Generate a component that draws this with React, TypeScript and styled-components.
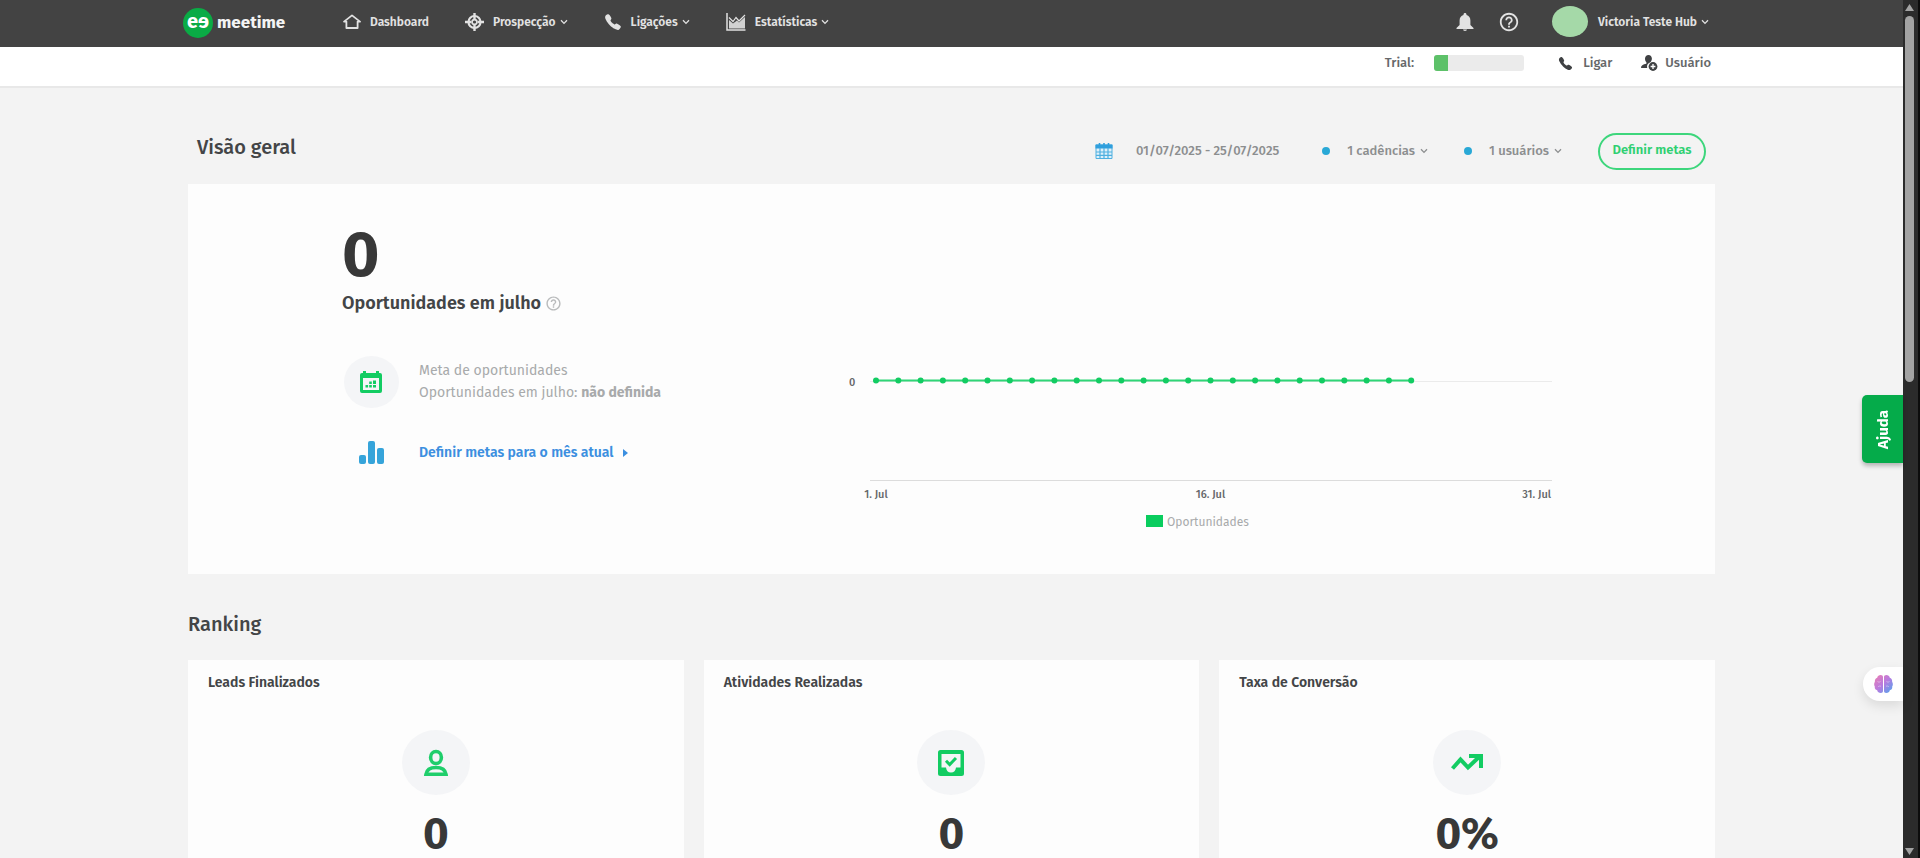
import React from "react";
import styled, { createGlobalStyle } from "styled-components";
import { IoCall } from "react-icons/io5";
import { MdHelpOutline } from "react-icons/md";

const GlobalStyle = createGlobalStyle`
  *, *::before, *::after { box-sizing: border-box; }
  body {
    margin: 0;
    background: #f3f3f3;
    color: #434547;
    font-family: "Fira Sans", "Noto Sans", "Open Sans", sans-serif;
    font-size: 13px;
    line-height: 20px;
  }
  h1, h2, h3, p, ul { margin: 0; padding: 0; }
  ul { list-style: none; }
  a { color: inherit; text-decoration: none; }
  button { font: inherit; color: inherit; background: none; border: 0; padding: 0; cursor: pointer; }
  svg { display: block; flex: none; }
`;

const Shell = styled.div`
  display: flex;
  height: 100vh;
  overflow: hidden;
`;

const Page = styled.div`
  flex: 1;
  min-width: 0;
  overflow: hidden;
`;

/* Top bar */
const TopBar = styled.header`
  background: #434343;
  color: #e2e2e2;
`;

const TopInner = styled.div`
  display: flex;
  align-items: center;
  max-width: 1537px;
  height: 47px;
  margin: 0 auto;
  padding: 0 11px 10px 0;
`;

const Brand = styled.a`
  display: flex;
  align-items: center;
  gap: 4px;
  width: 160px;
  padding-top: 8px;
  color: #f4f4f4;
  font-size: 17px;
  font-weight: 700;
`;

const BrandMark = styled.span`
  display: flex;
  justify-content: center;
  width: 30px;
  height: 30px;
  border-radius: 50%;
  background: #0aab45;
  color: #fff;
  font-size: 20px;
  line-height: 26px;
`;

const NavList = styled.ul`
  display: flex;
  gap: 36px;
  padding-top: 6px;
`;

const NavLink = styled.a`
  display: flex;
  align-items: center;
  gap: 9px;
  font-size: 12px;
  font-weight: 600;
`;

const WithCaret = styled.span<{ $gap?: number }>`
  display: inline-flex;
  align-items: center;
  gap: ${(p) => p.$gap ?? 4}px;
  white-space: nowrap;
`;

const TopActions = styled.div`
  display: flex;
  align-items: center;
  gap: 24px;
  margin-left: auto;
  padding-top: 6px;
`;

const IconButton = styled.button`
  display: flex;
`;

const Account = styled.button`
  display: flex;
  align-items: center;
  gap: 10px;
  margin-left: 8px;
  font-size: 12px;
  font-weight: 600;
`;

const Avatar = styled.span`
  width: 36px;
  height: 31px;
  border-radius: 50%;
  background: #a5d9a8;
`;

/* Secondary bar */
const SubBar = styled.div`
  background: #fff;
  border-bottom: 2px solid #e8e8e8;
`;

const SubInner = styled.div`
  display: flex;
  align-items: center;
  justify-content: flex-end;
  max-width: 1527px;
  height: 39px;
  margin: 0 auto;
  padding: 0 4px 7px 0;
  color: #66686a;
  font-size: 13px;
  font-weight: 500;
`;

const TrialMeter = styled.div`
  width: 90px;
  height: 16px;
  margin: 0 34px 0 20px;
  border-radius: 3px;
  overflow: hidden;
  background: #ebebeb;
`;

const TrialFill = styled.div`
  width: 15%;
  height: 100%;
  background: #5dc169;
`;

const SubLink = styled.button<{ $gap: number }>`
  display: flex;
  align-items: center;
  gap: ${(p) => p.$gap}px;
  & + & { margin-left: 29px; }
`;

/* Content */
const Content = styled.main`
  max-width: 1527px;
  margin: 0 auto;
`;

const OverviewHead = styled.div`
  display: flex;
  align-items: center;
  height: 96px;
  padding: 29px 9px 0 9px;
`;

const SectionTitle = styled.h2`
  color: #434547;
  font-size: 20px;
  font-weight: 500;
  line-height: 28px;
`;

const OverviewTitle = styled(SectionTitle)`
  padding-bottom: 8px;
`;

const Filters = styled.div`
  display: flex;
  align-items: center;
  margin-left: auto;
  color: #8c8e8f;
  font-size: 13px;
  font-weight: 500;
`;

const DateFilter = styled.button`
  display: flex;
  align-items: center;
  gap: 23px;
  margin-right: 7px;
`;

const DotFilter = styled.button`
  display: flex;
  align-items: center;
  gap: 17px;
  margin-left: 36px;
  &::before {
    content: "";
    width: 8px;
    height: 8px;
    border-radius: 50%;
    background: #29a8d6;
  }
`;

const GoalButton = styled.button`
  width: 108px;
  height: 37px;
  margin: 2px 0 0 36px;
  padding-bottom: 4px;
  border: 2px solid #3dd67c;
  border-radius: 19px;
  color: #2fd072;
  font-size: 13px;
  font-weight: 600;
  white-space: nowrap;
`;

const Panel = styled.section`
  background: #fdfdfd;
`;

const OverviewPanel = styled(Panel)`
  display: flex;
  justify-content: space-between;
  min-height: 390px;
  padding: 35px 162px 0 154px;
`;

const BigNumber = styled.p`
  color: #383838;
  font-size: 64px;
  font-weight: 700;
  line-height: 72px;
`;

const MetricName = styled.h3`
  display: flex;
  align-items: center;
  gap: 4px;
  font-size: 18px;
  font-weight: 600;
  line-height: 24px;
  white-space: nowrap;
  color: #434547;
  & svg { color: #b9bbbc; }
`;

const GoalRow = styled.div<{ $top: number }>`
  display: grid;
  grid-template-columns: 58px auto;
  column-gap: 19px;
  align-items: center;
  margin-top: ${(p) => p.$top}px;
`;

const IconDisc = styled.div<{ $w: number; $h: number }>`
  display: flex;
  align-items: center;
  justify-content: center;
  width: ${(p) => p.$w}px;
  height: ${(p) => p.$h}px;
  border-radius: 50%;
  background: #f4f5f7;
`;

const GoalIcon = styled.div`
  display: flex;
  justify-content: center;
`;

const GoalText = styled.p`
  color: #a8aaab;
  font-size: 14px;
  line-height: 22px;
  white-space: nowrap;
  & strong { font-weight: 700; }
`;

const GoalLink = styled.a`
  display: flex;
  align-items: center;
  gap: 9px;
  color: #3c8fe0;
  font-size: 14px;
  font-weight: 600;
  white-space: nowrap;
`;

const ChartBox = styled.figure`
  width: 704px;
  margin: 144px 0 0;
  & text { font-size: 11px; font-weight: 500; fill: #66686a; }
  & text.legend { font-size: 12px; font-weight: 400; fill: #a8aaab; }
`;

const RankingTitle = styled(SectionTitle)`
  margin: 36px 0 22px;
`;

const RankingGrid = styled.div`
  display: grid;
  grid-template-columns: repeat(3, 1fr);
  gap: 20px;
`;

const RankCard = styled(Panel)`
  display: flex;
  flex-direction: column;
  align-items: center;
  height: 260px;
  padding: 12px 20px;
`;

const RankName = styled.h3`
  align-self: flex-start;
  margin-bottom: 36px;
  font-size: 14px;
  font-weight: 600;
  line-height: 22px;
`;

const RankValue = styled.p`
  margin-top: 18px;
  color: #383838;
  font-size: 44px;
  font-weight: 700;
  line-height: 42px;
`;

/* Window-edge controls */
const HelpTab = styled.button`
  position: fixed;
  right: 17px;
  top: 395px;
  display: flex;
  align-items: center;
  justify-content: center;
  width: 41px;
  height: 68px;
  border-radius: 5px 0 0 5px;
  background: #05ab4a;
  color: #fff;
  font-size: 15px;
  font-weight: 700;
  box-shadow: 0 3px 4px rgba(0, 0, 0, 0.25);
  & span { writing-mode: vertical-rl; transform: rotate(180deg); }
`;

const AssistantTab = styled.button`
  position: fixed;
  right: 17px;
  top: 667px;
  display: flex;
  align-items: center;
  width: 40px;
  height: 34px;
  padding-left: 11px;
  border-radius: 17px 0 0 17px;
  background: #fff;
  box-shadow: 0 5px 12px rgba(0, 0, 0, 0.1);
`;

const ScrollRail = styled.div`
  display: flex;
  flex-direction: column;
  align-items: center;
  width: 17px;
  padding: 4px 2px 3px 0;
  background: #2b2b2b;
  border-right: 2px solid #0c0c0c;
`;

const ScrollThumb = styled.div`
  width: 9px;
  height: 43%;
  margin: 5px 0 auto;
  border-radius: 5px;
  background: #a3a3a3;
`;

const Caret = () => (
  <svg width="8" height="6" viewBox="0 0 8 6" fill="none" stroke="currentColor" strokeWidth="1.3" aria-hidden="true">
    <path d="M1 1.2 4 4.4 7 1.2" />
  </svg>
);

const HomeIcon = () => (
  <svg width="18" height="15" viewBox="0 0 18 15" fill="none" stroke="currentColor" strokeWidth="1.8" aria-hidden="true">
    <path d="M1 7.6 9 1.4l8 6.2h-2.4V14H3.4V7.6Z" strokeLinejoin="round" />
  </svg>
);

const TargetIcon = () => (
  <svg width="19" height="18" viewBox="0 0 19 18" fill="none" stroke="currentColor" aria-hidden="true">
    <circle cx="9.5" cy="9" r="6" strokeWidth="2.2" />
    <circle cx="9.5" cy="9" r="2.4" strokeWidth="1.6" />
    <path d="M9.5 0v6M9.5 12v6M0 9h6.500M12.500 9H19" strokeWidth="2.4" />
  </svg>
);

const StatsIcon = () => (
  <svg width="20" height="18" viewBox="0 0 20 18" fill="none" stroke="currentColor" aria-hidden="true">
    <path d="M1 0v17h18.500" strokeWidth="1.5" />
    <path d="M3 15.500V7l4 3.500 4-3 2 2L19 4v11.500Z" fill="currentColor" fillOpacity=".9" stroke="none" />
    <path d="m3 4.500 4 4 3-4 3 3.500L19 2" strokeWidth="1.2" />
  </svg>
);

const BellIcon = () => (
  <svg width="18" height="18" viewBox="0 0 18 18" fill="currentColor" aria-hidden="true">
    <path d="M9 0c.9 0 1.500.6 1.500 1.500v.6c2.500.7 3.900 2.700 3.900 5.400v4.600L17.500 15v.9H.5V15l3.100-2.900V7.500c0-2.700 1.400-4.700 3.900-5.400v-.6C7.500.6 8.100 0 9 0Z" />
    <path d="M7 16.600h4A2 1.400 0 0 1 7 16.600Z" />
  </svg>
);

const AddUserIcon = () => (
  <svg width="17" height="16" viewBox="0 0 17 16" aria-hidden="true">
    <path d="M7.500 0c2 0 3.400 1.500 3.400 3.600 0 1.500-.6 2.800-1.500 3.600A5 5 0 0 0 6.200 13H0c0-2.500 1.800-3.600 5.400-4.200V7.300C4.500 6.500 4 5.200 4 3.600 4 1.500 5.500 0 7.500 0Z" fill="#3f4143" />
    <circle cx="12" cy="11.500" r="4.400" fill="#3f4143" />
    <path d="M9.600 11.500h4.800M12 9.100v4.800" stroke="#fff" strokeWidth="1.3" />
  </svg>
);

const CalendarIcon = () => (
  <svg width="18" height="16" viewBox="0 0 18 16" aria-hidden="true">
    <path d="M1 2h16v13.500H1Z" fill="#dff0fa" stroke="#4fb0e0" />
    <path d="M.5 1.500h17v4H.5Z" fill="#2f9fdd" />
    <path d="M4.500 0v3M13.500 0v3M9 0v3" stroke="#2f9fdd" strokeWidth="1.6" />
    <path d="M1 9h16M1 12.300h16M5 5v10.500M9 5v10.500M13 5v10.500" stroke="#4fb0e0" strokeWidth="1.2" />
  </svg>
);

const GoalCalendarIcon = () => (
  <svg width="24" height="22" viewBox="0 0 24 22" fill="#12cc62" aria-hidden="true">
    <path fillRule="evenodd" d="M3 2h1V0h3v2h10V0h3v2h1a2 2 0 0 1 2 2v16a2 2 0 0 1-2 2H3a2 2 0 0 1-2-2V4a2 2 0 0 1 2-2Zm1 5v12h16V7Z" />
    <path d="M6.500 14h2.600v2.500H6.500ZM10.200 14h2.600v2.500h-2.600ZM10.200 10.500h2.600V13h-2.600ZM14 14h3v2.500h-3ZM14 9.500h3V13h-3Z" />
  </svg>
);

const BarsIcon = () => (
  <svg width="25" height="23" viewBox="0 0 25 23" fill="#36a4da" aria-hidden="true">
    <rect x="0" y="14" width="7" height="9" rx="2" />
    <rect x="9" y="0" width="7" height="23" rx="2" />
    <rect x="18" y="7" width="7" height="16" rx="2" />
  </svg>
);

const PersonIcon = () => (
  <svg width="26" height="28" viewBox="0 0 26 28" fill="none" stroke="#1fce6b" strokeWidth="3.6" aria-hidden="true">
    <ellipse cx="13" cy="8.5" rx="5.400" ry="6" />
    <path d="M3 25.200c.7-4.600 4-6.700 10-6.700s9.300 2.100 10 6.700Z" />
  </svg>
);

const InboxCheckIcon = () => (
  <svg width="26" height="26" viewBox="0 0 26 26" fill="#12cc62" aria-hidden="true">
    <path fillRule="evenodd" d="M2.500 0h21A2.500 2.500 0 0 1 26 2.500v21a2.500 2.500 0 0 1-2.500 2.500h-21A2.500 2.500 0 0 1 0 23.500v-21A2.500 2.500 0 0 1 2.500 0ZM3.500 4v13.500H8c.3 3 2 5 5 5s4.700-2 5-5h4.500V4Z" />
    <path d="m8 10.800 3.700 3.700L18 8" fill="none" stroke="#12cc62" strokeWidth="3" />
  </svg>
);

const TrendIcon = () => (
  <svg width="32" height="17" viewBox="0 0 32 17" fill="none" stroke="#12cc62" strokeWidth="4" aria-hidden="true">
    <path d="M1.500 14.500 9.500 5.500 17 13.500 28 3" />
    <path d="M18 2h12v12" />
    <path d="M24 2h6v6Z" fill="#12cc62" stroke="none" />
  </svg>
);

const BrainIcon = () => (
  <svg width="19" height="18" viewBox="0 0 19 18" aria-hidden="true">
    <defs>
      <linearGradient id="brain" x1="0" y1="0" x2="1" y2="1">
        <stop offset="0" stopColor="#f07fb0" />
        <stop offset=".5" stopColor="#b77be0" />
        <stop offset="1" stopColor="#4aa7ee" />
      </linearGradient>
    </defs>
    <path d="M9 2v14c0 1.300-.9 2-2.200 2C4.900 18 3.500 17 3.200 15.300 1.300 14.700.5 13.300.8 11.500-.1 10.200-.1 8 .9 6.700.6 4.800 1.500 3.200 3.200 2.700 3.600 1 4.900 0 6.600 0 8.100 0 9 .8 9 2ZM10 2v14c0 1.300.9 2 2.200 2 1.900 0 3.300-1 3.600-2.700 1.900-.6 2.700-2 2.400-3.800.9-1.300.9-3.500-.1-4.800.3-1.900-.6-3.500-2.300-4C15.400 1 14.100 0 12.400 0 10.900 0 10 .8 10 2Z" fill="url(#brain)" />
    <path d="M3.500 6.500c1 .8 2 .8 3 0M4 12c.8-1 2-1.300 3-.6M15.500 6.500c-1 .8-2 .8-3 0M15 12c-.8-1-2-1.300-3-.6" fill="none" stroke="#fff" strokeOpacity=".4" />
  </svg>
);

const DAYS = 31;
const TODAY = 25;
const STEP = 22.3;
const dayX = (day: number) => 27 + (day - 1) * STEP;

const OpportunitiesChart = () => (
  <ChartBox>
    <svg width="100%" viewBox="0 0 704 170" role="img" aria-label="Oportunidades por dia">
      <path d="M21 18.500H703" stroke="#ebebeb" />
      <path d="M21 117.500H703" stroke="#dcdcdc" />
      <path d={`M${dayX(1)} 17.500H${dayX(TODAY)}`} stroke="#2fd677" strokeWidth="2" />
      {Array.from({ length: TODAY }, (_, i) => (
        <circle key={i} cx={dayX(i + 1)} cy="17.5" r="3" fill="#12cc62" />
      ))}
      <text x="0" y="23">0</text>
      <text x={dayX(1)} y="135" textAnchor="middle">1. Jul</text>
      <text x={dayX(16)} y="135" textAnchor="middle">16. Jul</text>
      <text x={dayX(DAYS) + 6} y="135" textAnchor="end">31. Jul</text>
      <rect x="297" y="152" width="17" height="12" fill="#0acd5e" />
      <text className="legend" x="318" y="163">Oportunidades</text>
    </svg>
  </ChartBox>
);

const NAV = [
  { label: "Dashboard", icon: <HomeIcon />, menu: false },
  { label: "Prospecção", icon: <TargetIcon />, menu: true },
  { label: "Ligações", icon: <IoCall size={18} />, menu: true },
  { label: "Estatísticas", icon: <StatsIcon />, menu: true },
];

const RANKING = [
  { name: "Leads Finalizados", value: "0", icon: <PersonIcon /> },
  { name: "Atividades Realizadas", value: "0", icon: <InboxCheckIcon /> },
  { name: "Taxa de Conversão", value: "0%", icon: <TrendIcon /> },
];

export default function App() {
  return (
    <Shell>
      <GlobalStyle />
      <Page>
        <TopBar>
          <TopInner>
            <Brand href="#">
              <BrandMark aria-hidden="true">eɘ</BrandMark>
              meetime
            </Brand>
            <nav>
              <NavList>
                {NAV.map((item) => (
                  <li key={item.label}>
                    <NavLink href="#">
                      {item.icon}
                      <WithCaret>
                        {item.label}
                        {item.menu && <Caret />}
                      </WithCaret>
                    </NavLink>
                  </li>
                ))}
              </NavList>
            </nav>
            <TopActions>
              <IconButton aria-label="Notificações"><BellIcon /></IconButton>
              <IconButton aria-label="Ajuda"><MdHelpOutline size={22} /></IconButton>
              <Account>
                <Avatar />
                <WithCaret>Victoria Teste Hub<Caret /></WithCaret>
              </Account>
            </TopActions>
          </TopInner>
        </TopBar>
        <SubBar>
          <SubInner>
            <span>Trial:</span>
            <TrialMeter><TrialFill /></TrialMeter>
            <SubLink $gap={10}><IoCall size={15} color="#3f4143" />Ligar</SubLink>
            <SubLink $gap={7}><AddUserIcon />Usuário</SubLink>
          </SubInner>
        </SubBar>
        <Content>
          <OverviewHead>
            <OverviewTitle>Visão geral</OverviewTitle>
            <Filters>
              <DateFilter><CalendarIcon />01/07/2025 - 25/07/2025</DateFilter>
              <DotFilter><WithCaret $gap={5}>1 cadências<Caret /></WithCaret></DotFilter>
              <DotFilter><WithCaret $gap={5}>1 usuários<Caret /></WithCaret></DotFilter>
              <GoalButton>Definir metas</GoalButton>
            </Filters>
          </OverviewHead>
          <OverviewPanel>
            <div>
              <BigNumber>0</BigNumber>
              <MetricName>Oportunidades em julho <MdHelpOutline size={17} /></MetricName>
              <GoalRow $top={41}>
                <GoalIcon><IconDisc $w={55} $h={52}><GoalCalendarIcon /></IconDisc></GoalIcon>
                <GoalText>
                  Meta de oportunidades<br />
                  Oportunidades em julho: <strong>não definida</strong>
                </GoalText>
              </GoalRow>
              <GoalRow $top={33}>
                <GoalIcon><BarsIcon /></GoalIcon>
                <GoalLink href="#">
                  Definir metas para o mês atual
                  <svg width="5" height="8" viewBox="0 0 5 8" fill="currentColor" aria-hidden="true"><path d="M0 0l5 4-5 4Z" /></svg>
                </GoalLink>
              </GoalRow>
            </div>
            <OpportunitiesChart />
          </OverviewPanel>
          <RankingTitle>Ranking</RankingTitle>
          <RankingGrid>
            {RANKING.map((card) => (
              <RankCard key={card.name}>
                <RankName>{card.name}</RankName>
                <IconDisc $w={68} $h={65}>{card.icon}</IconDisc>
                <RankValue>{card.value}</RankValue>
              </RankCard>
            ))}
          </RankingGrid>
        </Content>
      </Page>
      <ScrollRail aria-hidden="true">
        <svg width="9" height="7" viewBox="0 0 9 7" fill="#a3a3a3"><path d="M4.500 0 9 7H0Z" /></svg>
        <ScrollThumb />
        <svg width="9" height="7" viewBox="0 0 9 7" fill="#a3a3a3"><path d="M4.500 7 9 0H0Z" /></svg>
      </ScrollRail>
      <HelpTab><span>Ajuda</span></HelpTab>
      <AssistantTab aria-label="Assistente"><BrainIcon /></AssistantTab>
    </Shell>
  );
}
